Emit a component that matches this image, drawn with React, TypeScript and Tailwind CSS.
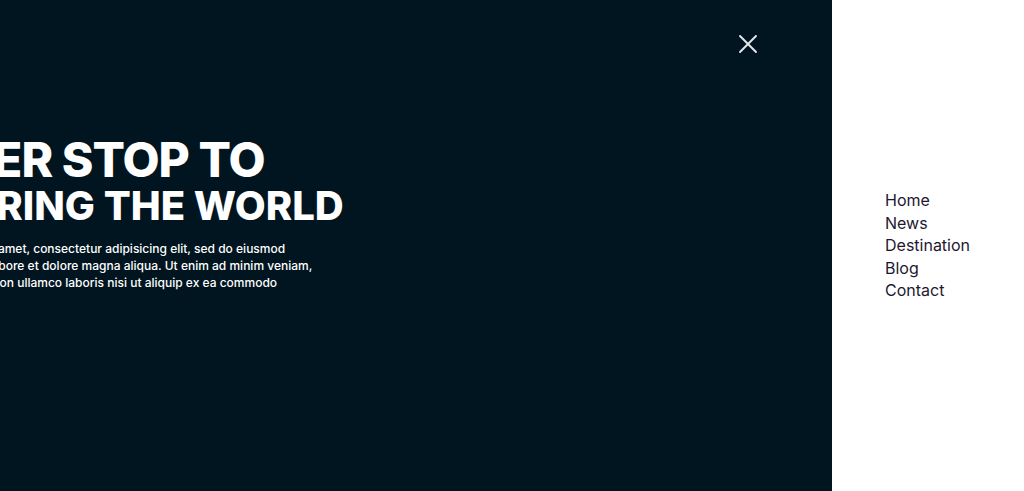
import { X } from "lucide-react"

const links = ["Home", "News", "Destination", "Blog", "Contact"]

export default function App() {
    return (
        <div className="flex h-screen w-full overflow-hidden font-['Inter',sans-serif]">
            {/* Dark hero panel */}
            <section className="relative flex-1 overflow-hidden bg-[#011520] text-white">
                <button className="absolute right-[68px] top-[28px] text-[#e5e7eb]">
                    <X className="h-[32px] w-[32px]" strokeWidth={1.4} />
                </button>

                <div className="pt-[135px] whitespace-nowrap">
                    <h1 className="font-extrabold uppercase">
                        <span className="ml-[-107px] block text-[48px] leading-[49px] tracking-[-0.02em]">Never stop to</span>
                        <span className="ml-[-137px] block text-[40px] leading-[44px]">Exploring the world</span>
                    </h1>
                    <p className="mt-[12px] text-[12px] font-medium leading-[17px]">
                        <span className="ml-[-129px] block">Lorem ipsum dolor sit amet, consectetur adipisicing elit, sed do eiusmod</span>
                        <span className="ml-[-130px] block">tempor incididunt ut labore et dolore magna aliqua. Ut enim ad minim veniam,</span>
                        <span className="ml-[-128px] block">quis nostrud exercitation ullamco laboris nisi ut aliquip ex ea commodo</span>
                    </p>
                </div>
            </section>

            {/* Side menu */}
            <nav className="flex w-[192px] flex-col justify-center bg-white pl-[53px]">
                <ul>
                    {links.map((link) => (
                        <li key={link}>
                            <a href="#" className="block text-[16px] leading-[22.5px] text-[#1d1730]">
                                {link}
                            </a>
                        </li>
                    ))}
                </ul>
            </nav>
        </div>
    )
}
